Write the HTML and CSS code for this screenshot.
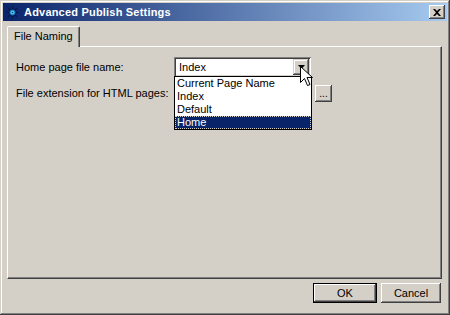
FILE: index.html
```html
<!DOCTYPE html>
<html lang="en">
<head>
  <meta charset="UTF-8" />
  <title>Advanced Publish Settings</title>
  <link rel="stylesheet" href="styles.css">
</head>
<body>
  <div class="window">
    <div class="titlebar">
      <svg class="app-icon" width="13" height="13" viewBox="0 0 13 13">
        <path d="M6.5 0 L7.6 4 L11.5 1.5 L9 5.4 L13 6.5 L9 7.6 L11.5 11.5 L7.6 9 L6.5 13 L5.4 9 L1.5 11.5 L4 7.6 L0 6.5 L4 5.4 L1.5 1.5 L5.4 4 Z" fill="#00104a"/>
        <circle cx="6.5" cy="6.5" r="3" fill="#1a6ab0"/>
        <circle cx="6.5" cy="6.5" r="2" fill="#40d0f0"/>
        <circle cx="6.5" cy="6.5" r="0.8" fill="#0a3a80"/>
      </svg>
      <span class="title">Advanced Publish Settings</span>
      <button class="close-btn">
        <svg width="8" height="7" viewBox="0 0 8 7">
          <path d="M0 0 L2 0 L4 2 L6 0 L8 0 L5 3.5 L8 7 L6 7 L4 5 L2 7 L0 7 L3 3.5 Z" fill="#000"/>
        </svg>
      </button>
    </div>

    <div class="content">
      <div class="tabs">
        <div class="tab active">File Naming</div>
      </div>

      <div class="panel">
        <div class="form">
          <label class="label">Home page file name:</label>
          <div class="combo-wrap">
            <div class="combo">
              <span class="combo-value">Index</span>
              <span class="combo-btn">
                <svg width="7" height="4" viewBox="0 0 7 4"><path d="M0 0 H7 L3.5 4 Z" fill="#000"/></svg>
              </span>
            </div>
            <ul class="dropdown">
              <li>Current Page Name</li>
              <li>Index</li>
              <li>Default</li>
              <li class="selected">Home</li>
            </ul>
            <svg class="cursor" width="13" height="20" viewBox="0 0 13 20">
              <path d="M0.5 0.5 V16.5 L4.5 12.5 L7.5 19.5 L10 18.5 L7 11.5 H12.5 Z" fill="#fff" stroke="#000" stroke-width="1"/>
            </svg>
          </div>

          <label class="label">File extension for HTML pages:</label>
          <div class="ext-row">
            <div class="field"></div>
            <button class="small-btn">...</button>
          </div>
        </div>
      </div>

      <div class="buttons">
        <button class="btn default">OK</button>
        <button class="btn">Cancel</button>
      </div>
    </div>
  </div>
</body>
</html>
```

FILE: styles.css
```css
body {
  margin: 0;
  font-family: 'Liberation Sans', Arial, sans-serif;
  font-size: 11px;
  color: #000;
  background: #d4d0c8;
}

.window {
  box-sizing: border-box;
  width: 450px;
  height: 315px;
  padding: 3px;
  background: #d4d0c8;
  box-shadow:
    inset -1px -1px 0 #404040,
    inset 1px 1px 0 #d4d0c8,
    inset -2px -2px 0 #808080,
    inset 2px 2px 0 #ffffff;
}

.titlebar {
  display: flex;
  align-items: center;
  height: 18px;
  padding: 0 2px 0 3px;
  background: linear-gradient(to right, #0a246a, #a6caf0);
  color: #fff;
}

.app-icon {
  margin-right: 5px;
}

.title {
  flex: 1;
  font-weight: bold;
  font-size: 11px;
  letter-spacing: 0.2px;
}

.close-btn {
  display: flex;
  align-items: center;
  justify-content: center;
  width: 16px;
  height: 14px;
  padding: 0;
  border: none;
  background: #d4d0c8;
  box-shadow:
    inset -1px -1px 0 #404040,
    inset 1px 1px 0 #ffffff,
    inset -2px -2px 0 #808080;
}

.content {
  padding: 5px 5px 0 4px;
}

.tabs {
  display: flex;
  height: 20px;
  align-items: flex-end;
}

.tab {
  box-sizing: border-box;
  height: 21px;
  margin-bottom: -1px;
  padding: 3px 6px 0 6px;
  background: #d4d0c8;
  border-top: 1px solid #fff;
  border-left: 1px solid #fff;
  border-right: 1px solid #404040;
  border-radius: 2px 2px 0 0;
  box-shadow: inset -1px 0 0 #808080;
  position: relative;
  z-index: 1;
}

.panel {
  box-sizing: border-box;
  height: 233px;
  padding: 10px 7px;
  border-top: 1px solid #fff;
  border-left: 1px solid #fff;
  border-right: 1px solid #404040;
  border-bottom: 1px solid #404040;
  box-shadow: inset -1px -1px 0 #808080;
}

.form {
  display: grid;
  grid-template-columns: 159px auto;
  row-gap: 6px;
  align-items: center;
}

.label {
  padding-left: 1px;
}

.combo-wrap {
  position: relative;
  width: 137px;
}

.combo {
  box-sizing: border-box;
  display: flex;
  align-items: center;
  height: 20px;
  padding: 2px;
  background: #fff;
  box-shadow:
    inset 1px 1px 0 #808080,
    inset -1px -1px 0 #ffffff,
    inset 2px 2px 0 #404040,
    inset -2px -2px 0 #d4d0c8;
}

.combo-value {
  flex: 1;
  padding-left: 3px;
}

.combo-btn {
  display: flex;
  align-items: center;
  justify-content: center;
  width: 16px;
  height: 16px;
  background: #d4d0c8;
  box-shadow:
    inset -1px -1px 0 #404040,
    inset 1px 1px 0 #d4d0c8,
    inset -2px -2px 0 #808080,
    inset 2px 2px 0 #ffffff;
}

.dropdown {
  position: absolute;
  left: 0;
  top: 19px;
  z-index: 2;
  box-sizing: border-box;
  width: 138px;
  margin: 0;
  padding: 0;
  list-style: none;
  background: #fff;
  border: 1px solid #000;
}

.dropdown li {
  height: 13px;
  line-height: 13px;
  padding-left: 2px;
}

.dropdown li.selected {
  background: #0a246a;
  color: #fff;
  outline: 1px dotted #d4d0c8;
  outline-offset: -1px;
}

.cursor {
  position: absolute;
  left: 126px;
  top: 9px;
  z-index: 3;
}

.ext-row {
  display: flex;
  align-items: center;
  gap: 4px;
}

.field {
  width: 137px;
  height: 20px;
  background: #fff;
}

.small-btn {
  width: 17px;
  height: 17px;
  padding: 0;
  border: none;
  font: inherit;
  font-size: 10px;
  background: #d4d0c8;
  box-shadow:
    inset -1px -1px 0 #404040,
    inset 1px 1px 0 #ffffff,
    inset -2px -2px 0 #808080;
}

.buttons {
  display: flex;
  justify-content: flex-end;
  gap: 4px;
  margin-top: 4px;
  padding-right: 1px;
}

.btn {
  width: 60px;
  height: 20px;
  padding: 0;
  border: none;
  font: inherit;
  font-size: 11px;
  background: #d4d0c8;
  box-shadow:
    inset -1px -1px 0 #404040,
    inset 1px 1px 0 #ffffff,
    inset -2px -2px 0 #808080;
}

.btn.default {
  width: 64px;
  box-shadow:
    inset 0 0 0 1px #000,
    inset -2px -2px 0 #404040,
    inset 2px 2px 0 #ffffff,
    inset -3px -3px 0 #808080;
}
```
